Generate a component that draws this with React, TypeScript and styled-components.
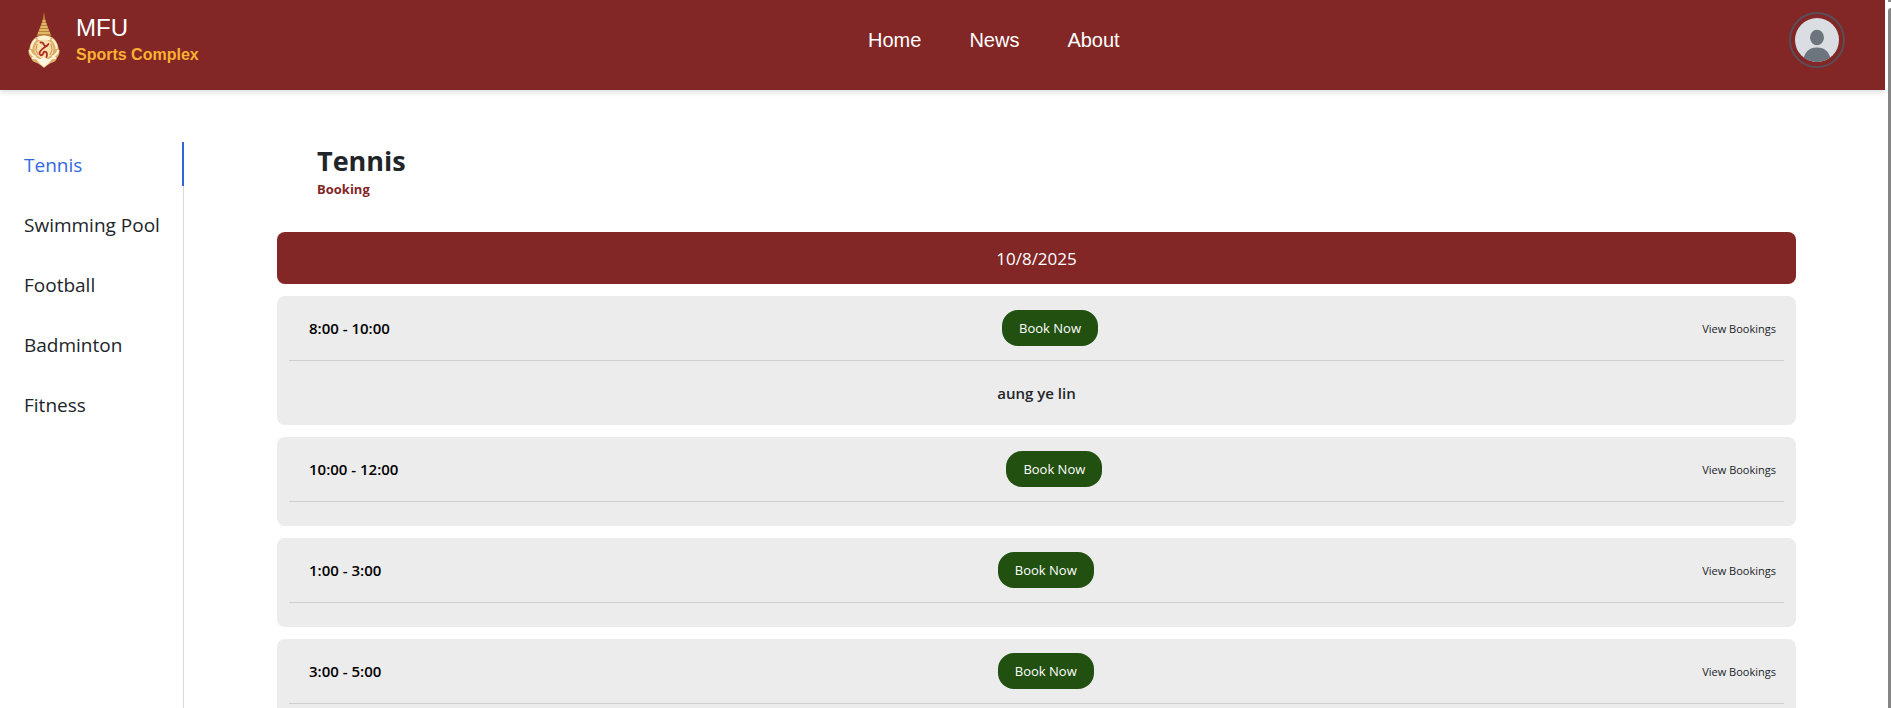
import React from "react";
import styled, { createGlobalStyle } from "styled-components";

const maroon = "#822626";
const uiFont = `"Segoe UI", "Open Sans", "Noto Sans", sans-serif`;
const brandFont = `Arial, "Liberation Sans", sans-serif`;

const GlobalStyle = createGlobalStyle`
  *, *::before, *::after { box-sizing: border-box; }
  body { margin: 0; background: #fff; color: #212529; font-family: ${uiFont}; }
  a { color: inherit; text-decoration: none; }
  button { font: inherit; border: 0; cursor: pointer; }
  h1, p, ul, ol { margin: 0; padding: 0; }
  ul, ol { list-style: none; }
`;

const Frame = styled.div`
  display: flex;
  height: 100vh;
`;

const Page = styled.div`
  flex: 1;
  min-width: 0;
  overflow-y: auto;
  scrollbar-width: none;
`;

const ScrollTrack = styled.div`
  display: flex;
  flex-direction: column;
  gap: 6px;
  width: 6px;
  padding-left: 3px;
  background: #fff;
`;

const ScrollArrow = styled.div`
  height: 2px;
  background: #8a8a8a;
`;

const ScrollThumb = styled.div`
  flex: 1;
  border-top-left-radius: 3px;
  background: #858585;
`;

const Header = styled.header`
  display: flex;
  justify-content: space-between;
  align-items: center;
  height: 90px;
  padding: 0 40px 10px 28px;
  background: ${maroon};
  box-shadow: 0 2px 6px rgba(0, 0, 40, 0.15);
  font-family: ${brandFont};
  color: #fff;
`;

const Brand = styled.a`
  display: flex;
  align-items: center;
  gap: 16px;
`;

const BrandText = styled.span`
  display: flex;
  flex-direction: column;
  padding-top: 2px;
`;

const BrandName = styled.span`
  font-size: 24px;
  line-height: 28px;
`;

const BrandTagline = styled.span`
  font-size: 16px;
  line-height: 26px;
  font-weight: 700;
  color: #fbb034;
`;

const TopNav = styled.nav`
  display: flex;
  gap: 48px;
  font-size: 20px;
  line-height: 24px;
`;

const AvatarButton = styled.button`
  display: flex;
  padding: 4px;
  border: 2px solid #5a4f58;
  border-radius: 50%;
  background: transparent;
`;

const Body = styled.div`
  display: flex;
  padding-top: 52px;
`;

const Sidebar = styled.nav`
  flex: none;
  width: 184px;
  min-height: calc(100vh - 142px);
  box-shadow: inset -1px 0 #d6d9dd;
`;

const SideList = styled.ul`
  display: flex;
  flex-direction: column;
  gap: 16px;
`;

const SideLink = styled.a<{ $active?: boolean }>`
  display: block;
  padding: 8px 0 6px 24px;
  border-right: 2px solid ${(p) => (p.$active ? "#2f69d9" : "transparent")};
  font-size: 19px;
  line-height: 30px;
  white-space: nowrap;
  color: ${(p) => (p.$active ? "#3268e0" : "#212529")};
`;

const Content = styled.main`
  flex: 1;
  min-width: 0;
  padding: 0 89px 12px 93px;
`;

const Heading = styled.div`
  padding: 0 40px 34px;
`;

const Title = styled.h1`
  font-size: 27px;
  line-height: 38px;
  font-weight: 700;
`;

const Subtitle = styled.p`
  font-size: 13px;
  line-height: 18px;
  font-weight: 700;
  color: ${maroon};
`;

const Schedule = styled.ol`
  display: flex;
  flex-direction: column;
  gap: 12px;
`;

const DateBar = styled.li`
  padding: 14px 12px 12px;
  border-radius: 8px;
  background: ${maroon};
  color: #fff;
  font-size: 17px;
  line-height: 26px;
  text-align: center;
`;

const Slot = styled.li`
  padding: 0 12px 24px;
  border-radius: 8px;
  background: #ececec;
`;

const SlotRow = styled.div`
  display: flex;
  justify-content: space-between;
  align-items: center;
  padding: 14px 0;
  border-bottom: 1px solid #cfcfcf;
`;

const SlotTime = styled.time`
  padding: 0 20px;
  font-size: 15px;
  line-height: 24px;
  font-weight: 600;
  color: #000;
`;

const BookButton = styled.button`
  padding: 8px 17px;
  border-radius: 16px;
  background: #215010;
  color: #fff;
  font-size: 13px;
  line-height: 20px;
  font-weight: 500;
`;

const ViewButton = styled.button`
  padding: 2px 8px 0 12px;
  background: transparent;
  color: #212529;
  font-size: 11px;
  line-height: 20px;
`;

const Guest = styled.p`
  padding-top: 20px;
  font-size: 15px;
  line-height: 24px;
  font-weight: 600;
  text-align: center;

  &:last-child {
    margin-bottom: -4px;
  }
`;

const sports = ["Tennis", "Swimming Pool", "Football", "Badminton", "Fitness"];

const slots: { time: string; guests: string[] }[] = [
  { time: "8:00 - 10:00", guests: ["aung ye lin"] },
  { time: "10:00 - 12:00", guests: [] },
  { time: "1:00 - 3:00", guests: [] },
  { time: "3:00 - 5:00", guests: [] },
];

const Crest = () => (
  <svg width="32" height="56" viewBox="0 0 32 56" aria-hidden="true">
    <path d="M16 0 L17.500 9 L23.500 24 H8.500 L14.500 9 Z" fill="#b9813a" />
    <path
      d="M14.500 9h3M13.500 12h5M12.500 15h7M11.500 18h9M10 21h12"
      stroke="#eec777"
      strokeWidth="1.500"
      fill="none"
    />
    <path
      d="M8 25 Q16 22 24 25 Q30 30 30.500 36 Q33 42 29 46 Q28 50 23 51 Q19 53 16 56 Q13 53 9 51 Q4 50 3 46 Q-1 42 1.500 36 Q2 30 8 25 Z"
      fill="#dcae68"
    />
    <path
      d="M8 27 Q3 32 3.500 37 M24 27 Q29 32 28.500 37 M1.500 38 Q3 43 8 45 M30.500 38 Q29 43 24 45 M4 46 Q10 45 14 52 M28 46 Q22 45 18 52"
      stroke="#fff1d3"
      strokeWidth="2.200"
      fill="none"
    />
    <path d="M9 25 Q16 22 23 25 L22 28 H10 Z" fill="#fff0cf" />
    <ellipse cx="16" cy="37" rx="9.500" ry="9.500" fill="#f8dfae" />
    <path
      d="M9 32 Q6.500 38 10 43 M23 32 Q25.500 38 22 43"
      stroke="#c98d3e"
      strokeWidth="1"
      fill="none"
    />
    <path d="M8 47 Q12 48 16 45 Q20 48 24 47 Q21 52 16 55 Q11 52 8 47 Z" fill="#fff4df" />
    <path
      d="M12.500 30.500 Q15 30 16 33 Q18 35.500 20.500 32 M19.500 33.500 Q12 38 11.500 41 Q12 45 15 42 Q16 38 18.500 40.500 Q19.500 43 18.500 45"
      stroke="#ad2a20"
      strokeWidth="1.800"
      strokeLinecap="round"
      fill="none"
    />
  </svg>
);

const Portrait = () => (
  <svg width="44" height="44" viewBox="0 0 44 44" aria-hidden="true">
    <defs>
      <clipPath id="portrait">
        <circle cx="22" cy="22" r="22" />
      </clipPath>
    </defs>
    <g clipPath="url(#portrait)">
      <rect width="44" height="44" fill="#dadde2" />
      <ellipse cx="22" cy="19.500" rx="7" ry="7.700" fill="#6c757d" />
      <path d="M8 44 C9 34 14 29.500 22 29.500 S35 34 36 44 Z" fill="#6c757d" />
    </g>
  </svg>
);

export default function App() {
  return (
    <>
      <GlobalStyle />
      <Frame>
        <Page>
          <Header>
            <Brand href="#">
              <Crest />
              <BrandText>
                <BrandName>MFU</BrandName>
                <BrandTagline>Sports Complex</BrandTagline>
              </BrandText>
            </Brand>
            <TopNav aria-label="Main">
              <a href="#home">Home</a>
              <a href="#news">News</a>
              <a href="#about">About</a>
            </TopNav>
            <AvatarButton type="button" aria-label="Account">
              <Portrait />
            </AvatarButton>
          </Header>
          <Body>
            <Sidebar aria-label="Sports">
              <SideList>
                {sports.map((sport, i) => (
                  <li key={sport}>
                    <SideLink
                      href={`#${sport}`}
                      $active={i === 0}
                      aria-current={i === 0 ? "page" : undefined}
                    >
                      {sport}
                    </SideLink>
                  </li>
                ))}
              </SideList>
            </Sidebar>
            <Content>
              <Heading>
                <Title>Tennis</Title>
                <Subtitle>Booking</Subtitle>
              </Heading>
              <Schedule>
                <DateBar>10/8/2025</DateBar>
                {slots.map((slot) => (
                  <Slot key={slot.time}>
                    <SlotRow>
                      <SlotTime>{slot.time}</SlotTime>
                      <BookButton type="button">Book Now</BookButton>
                      <ViewButton type="button">View Bookings</ViewButton>
                    </SlotRow>
                    {slot.guests.map((guest) => (
                      <Guest key={guest}>{guest}</Guest>
                    ))}
                  </Slot>
                ))}
              </Schedule>
            </Content>
          </Body>
        </Page>
        <ScrollTrack aria-hidden="true">
          <ScrollArrow />
          <ScrollThumb />
        </ScrollTrack>
      </Frame>
    </>
  );
}
